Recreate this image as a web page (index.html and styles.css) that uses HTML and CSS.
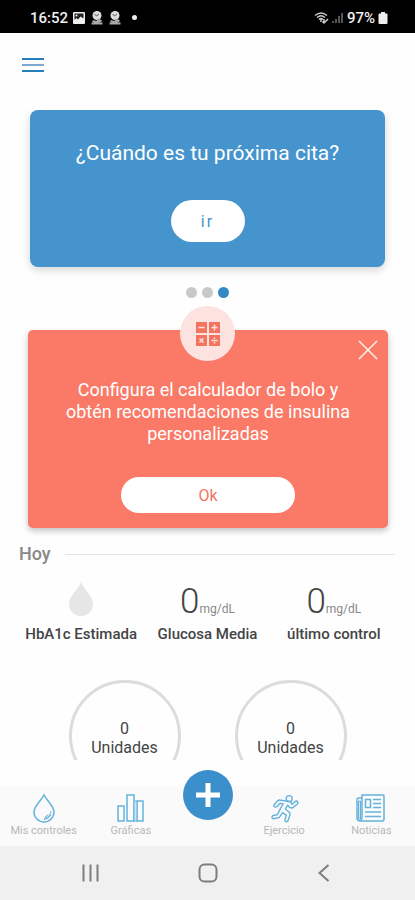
FILE: index.html
```html
<!DOCTYPE html>
<html lang="es">
<head>
  <meta charset="utf-8">
  <meta name="viewport" content="width=device-width, initial-scale=1">
  <title>Mis controles</title>
  <link rel="stylesheet" href="styles.css">
</head>
<body>
  <div class="status">
    <div class="status-group">
      <span class="clock">16:52</span>
      <svg class="status-icon" viewBox="0 0 14 14"><rect x="1" y="1" width="12" height="12" rx="1" fill="#eee"/><path d="M2.500 2.500h9v5l-3-2-2.500 3-1.500-1.500-2 2z" fill="#222"/><circle cx="4.500" cy="4.500" r="1" fill="#eee"/></svg>
      <svg class="status-icon" viewBox="0 0 14 14"><circle cx="7" cy="4.500" r="4.500" fill="#ddd"/><path d="M4.500 3l2 2 2.500-2" fill="none" stroke="#555"/><path d="M7 8.500l4.500 1.500M1.500 12.500h11M2.500 10l3.500 1 5-1" stroke="#aaa" stroke-width="2" fill="none"/></svg>
      <svg class="status-icon" viewBox="0 0 14 14"><circle cx="7" cy="4.500" r="4.500" fill="#ddd"/><path d="M4.500 3l2 2 2.500-2" fill="none" stroke="#555"/><path d="M7 8.500l4.500 1.500M1.500 12.500h11M2.500 10l3.500 1 5-1" stroke="#aaa" stroke-width="2" fill="none"/></svg>
      <span class="status-dot"></span>
    </div>
    <div class="status-group status-right">
      <svg class="wifi" viewBox="0 0 30 14"><path d="M1 4.500q6-5 12 0M3 6.500q4-3.500 8 0M5 8.500q2-2 4 0" fill="none" stroke="#ccc" stroke-width="1.500"/><path d="M7 8v3M10 8v4M8.500 10.500l1.500 1.500 4-4" fill="none" stroke="#ccc" stroke-width="1.500"/><path d="M18 12v-2h2v2zM21 12V8h2v4zM24 12V5h2v7zM27 12V2h2v10z" fill="#555"/></svg>
      <span class="clock">97%</span>
      <svg class="battery" viewBox="0 0 10 14"><path d="M3 1h4v1.500h1.500q1 0 1 1V12q0 1-1 1h-7q-1 0-1-1V3.500q0-1 1-1H3z" fill="#eee"/></svg>
    </div>
  </div>

  <header class="topbar">
    <button class="menu" aria-label="Menú">
      <svg viewBox="0 0 22 16"><path d="M0 2h22M0 14h22" stroke="#2480bb" stroke-width="2"/><path d="M0 8h22" stroke="#7fa9cc" stroke-width="2"/></svg>
    </button>
  </header>

  <main class="content">
    <section class="card appointment">
      <h1 class="appointment-title">¿Cuándo es tu próxima cita?</h1>
      <button class="pill go">ir</button>
    </section>
    <div class="pager">
      <span class="page"></span><span class="page"></span><span class="page current"></span>
    </div>

    <section class="card bolus">
      <span class="badge">
        <svg viewBox="0 0 26 26"><path d="M1 1h11v11H1zM14 1h11v11H14zM1 14h11v11H1zM14 14h11v11H14z" fill="#f3745f"/><path d="M3.500 6.500h6M16.500 6.500h6M19.500 3.500v6M4.500 17.500l4 4M8.500 17.500l-4 4M16.500 19.500h6M19.500 16.500v1.500M19.500 21v1.500" stroke="#fde3df" stroke-width="1.500"/></svg>
      </span>
      <button class="close" aria-label="Cerrar">
        <svg viewBox="0 0 20 20"><path d="M1 1l18 18M19 1L1 19" stroke="#fff0ec" stroke-width="1.500"/></svg>
      </button>
      <p class="bolus-text">Configura el calculador de bolo y obtén recomendaciones de insulina personalizadas</p>
      <button class="pill ok">Ok</button>
    </section>

    <h2 class="today">Hoy</h2>
    <section class="stats">
      <div class="stat">
        <div class="figure drop"><svg viewBox="0 0 26 34"><path d="M13 0C10 8 1 14 1 22a12 12 0 0 0 24 0C25 14 16 8 13 0z" fill="#e6e6e6"/></svg></div>
        <div class="stat-label">HbA1c Estimada</div>
      </div>
      <div class="stat">
        <div class="figure"><span class="value">0</span><span class="unit">mg/dL</span></div>
        <div class="stat-label">Glucosa Media</div>
      </div>
      <div class="stat">
        <div class="figure"><span class="value">0</span><span class="unit">mg/dL</span></div>
        <div class="stat-label">último control</div>
      </div>
    </section>
    <section class="rings">
      <div class="ring"><span>0</span><span>Unidades</span></div>
      <div class="ring"><span>0</span><span>Unidades</span></div>
    </section>
  </main>

  <nav class="tabs">
    <a class="tab" href="#controles">
      <svg viewBox="0 0 30 30"><path d="M15 2C12 8 5 13 5 19a10 10 0 0 0 20 0C25 13 18 8 15 2z"/><path d="M22 18q0 6-7 7.500M19.500 21q-1 2-3.500 3M22 22q-2 4-7 4.500" class="thin"/></svg>
      <span>Mis controles</span>
    </a>
    <a class="tab" href="#graficas">
      <svg viewBox="0 0 30 30"><path d="M2 13h6v15H2zM11 2h7v26h-7zM21 8h6v20h-6z"/><path d="M18 8h3v20h-3z" fill="#cfe6f3" class="thin"/></svg>
      <span>Gráficas</span>
    </a>
    <button class="add" aria-label="Añadir">
      <svg viewBox="0 0 26 26"><path d="M13 1v24M1 13h24" stroke="#fff" stroke-width="5"/></svg>
    </button>
    <a class="tab" href="#ejercicio">
      <svg viewBox="-1 -1 32 32"><circle cx="20.500" cy="5" r="3.200"/><path d="M17 7.500L10 6.500q-1 0-2 1L4.500 11.500q-1 2 1 2.500l2-.500 3.500-3.500 3 .500-3.500 6.500-2.500 5-4.500 1q-2 1-1 3l1.500.500 6-1.500 3.500-5 4 2.500-1.500 5.500q0 2 2 1.500l1-.500 2.500-7-.500-2-4.500-4 2.500-4 2 2.500 3 .500 5.500-4.500q1-2-1-3l-1.500.500-3.500 3-2-3z"/></svg>
      <span>Ejercicio</span>
    </a>
    <a class="tab" href="#noticias">
      <svg viewBox="0 0 30 30"><path d="M6 2h21q1 0 1 1v23q0 2-2 2H4q-3 0-3-3V7q0-2 2-2h3zM6 2v23q0 2-2 3"/><path d="M9.500 6.500h5v8h-5zM17 6.500h8M17 10.500h8M17 14.500h8M9 19h16M9 23.500h16"/><path d="M2.500 8h2v18h-2z" class="thin" fill="#cfe6f3"/></svg>
      <span>Noticias</span>
    </a>
  </nav>

  <div class="system">
    <button class="key" aria-label="Recientes"><svg viewBox="0 0 20 20"><path d="M2.500 1.500v17M9.500 1.500v17M16.500 1.500v17"/></svg></button>
    <button class="key" aria-label="Inicio"><svg viewBox="0 0 20 20"><rect x="1.500" y="1.500" width="17" height="17" rx="5"/></svg></button>
    <button class="key" aria-label="Atrás"><svg viewBox="0 0 20 20"><path d="M13.500 2l-9 8 9 8"/></svg></button>
  </div>
</body>
</html>
```
FILE: styles.css
```css
* {
  box-sizing: border-box;
}

body {
  margin: 0;
  height: 100vh;
  display: flex;
  flex-direction: column;
  font-family: Roboto, "Liberation Sans", sans-serif;
  background: #fefefe;
  color: #444;
}

button {
  border: 0;
  padding: 0;
  background: none;
  font-family: inherit;
}

svg {
  display: block;
}

.status {
  flex: none;
  height: 33px;
  padding: 2px 27px 0 30px;
  display: flex;
  align-items: center;
  justify-content: space-between;
  background: #000;
  color: #eee;
}

.status-group {
  display: flex;
  align-items: center;
  gap: 4px;
}

.status-right {
  gap: 3px;
}

.clock {
  font-size: 15px;
  line-height: 20px;
  font-weight: 500;
}

.status-icon {
  width: 14px;
  height: 14px;
}

.status-dot {
  width: 5px;
  height: 5px;
  margin-left: 6px;
  border-radius: 50%;
  background: #eee;
}

.wifi {
  width: 30px;
  height: 14px;
}

.battery {
  width: 10px;
  height: 14px;
}

.topbar {
  flex: none;
  height: 77px;
  padding: 24px 22px;
}

.menu svg {
  width: 22px;
  height: 16px;
}

.content {
  flex: 1;
  min-height: 0;
  overflow: hidden;
}

.card {
  display: flex;
  flex-direction: column;
  align-items: center;
  color: #fff;
}

.appointment {
  margin: 0 30px;
  padding: 30px 20px 25px;
  gap: 34px;
  border-radius: 8px;
  background: #4594cd;
  box-shadow: 0 3px 8px rgba(0, 0, 0, 0.16);
}

.appointment-title {
  margin: 0;
  font-size: 21px;
  line-height: 26px;
  font-weight: 400;
  text-align: center;
}

.pill {
  border-radius: 24px;
  background: #fff;
}

.go {
  width: 74px;
  height: 42px;
  font-size: 16px;
  letter-spacing: 2px;
  color: #4594cd;
}

.pager {
  display: flex;
  justify-content: center;
  gap: 5px;
  padding: 20px 0 32px;
}

.page {
  width: 11px;
  height: 11px;
  border-radius: 50%;
  background: #c9c9c9;
}

.page.current {
  background: #3488c6;
}

.bolus {
  position: relative;
  margin: 0 27px 0 28px;
  padding: 49px 30px 15px;
  gap: 32px;
  border-radius: 5px;
  background: #fa7a67;
  box-shadow: 0 3px 6px rgba(0, 0, 0, 0.24);
}

.badge {
  position: absolute;
  top: -24px;
  left: 50%;
  margin-left: -28px;
  width: 55px;
  height: 55px;
  display: grid;
  place-items: center;
  border-radius: 50%;
  background: #fde3df;
}

.badge svg {
  width: 26px;
  height: 26px;
}

.close {
  position: absolute;
  top: 10px;
  right: 10px;
}

.close svg {
  width: 20px;
  height: 20px;
}

.bolus-text {
  margin: 0;
  font-size: 18px;
  line-height: 22px;
  text-align: center;
}

.ok {
  width: 174px;
  height: 36px;
  font-size: 16px;
  color: #f3745f;
}

.today {
  display: flex;
  align-items: center;
  gap: 14px;
  margin: 14px 20px 0 19px;
  font-size: 18px;
  line-height: 24px;
  font-weight: 500;
  color: #888;
}

.today::after {
  content: "";
  flex: 1;
  height: 1px;
  background: #e4e4e4;
}

.stats {
  display: grid;
  grid-template-columns: repeat(3, 1fr);
  margin: 16px 18px 0;
}

.stat {
  text-align: center;
}

.figure {
  height: 42px;
  display: flex;
  justify-content: center;
  align-items: baseline;
}

.drop svg {
  width: 26px;
  height: 34px;
}

.value {
  font-size: 35px;
  line-height: 40px;
  font-weight: 300;
}

.unit {
  font-size: 12px;
  color: #888;
}

.stat-label {
  font-size: 15px;
  line-height: 20px;
  font-weight: 500;
}

.rings {
  display: flex;
  justify-content: center;
  gap: 54px;
  margin-top: 36px;
}

.ring {
  width: 112px;
  height: 112px;
  flex: none;
  display: flex;
  flex-direction: column;
  align-items: center;
  justify-content: center;
  padding-top: 4px;
  border: 3px solid #dcdcdc;
  border-radius: 50%;
  font-size: 16px;
  line-height: 19px;
}

.tabs {
  flex: none;
  height: 60px;
  margin-top: 26px;
  display: grid;
  grid-template-columns: 1fr 1fr 66px 1fr 1fr;
  background: #fafafa;
}

.tab {
  display: flex;
  flex-direction: column;
  align-items: center;
  padding-top: 7px;
  font-size: 11px;
  line-height: 16px;
  color: #b8b8b8;
  text-decoration: none;
}

.tab svg {
  width: 30px;
  height: 30px;
  fill: none;
  stroke: #65b2dc;
  stroke-width: 1.5;
}

.tab .thin {
  stroke-width: 1;
}

.add {
  justify-self: center;
  width: 50px;
  height: 50px;
  margin-top: -16px;
  display: grid;
  place-items: center;
  border-radius: 50%;
  background: #3b8fca;
}

.add svg {
  width: 26px;
  height: 26px;
}

.system {
  flex: none;
  height: 54px;
  padding: 0 32px;
  display: grid;
  grid-template-columns: repeat(3, 1fr);
  align-items: center;
  justify-items: center;
  background: #f0f0f0;
}

.key svg {
  width: 20px;
  height: 20px;
  fill: none;
  stroke: #7d7d7d;
  stroke-width: 2;
}
```
